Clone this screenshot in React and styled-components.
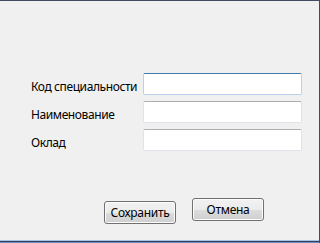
import React from "react";
import styled, { createGlobalStyle } from "styled-components";

const GlobalStyle = createGlobalStyle`
  html, body {
    margin: 0;
    padding: 0;
    background: #f0f0f0;
  }
  body {
    font-family: "Noto Sans", "Open Sans", sans-serif;
  }
`;

const fields = [
  { label: "Код специальности", focused: true },
  { label: "Наименование" },
  { label: "Оклад" },
];

const App = () => {
  return (
    <>
      <GlobalStyle />
      <Window>
        <Form>
          {fields.map((f) => (
            <Row key={f.label}>
              <Label>{f.label}</Label>
              <Input $focused={f.focused} />
            </Row>
          ))}
        </Form>
        <Buttons>
          <Button $top={3}>Сохранить</Button>
          <Button $top={0}>Отмена</Button>
        </Buttons>
        <BottomEdge />
      </Window>
    </>
  );
};

export default App;

const Window = styled.div`
  width: 319px;
  height: 242px;
  border-top: 1px solid #444b63;
  border-right: 1px solid #444b63;
  background: #f0f0f0;
  display: flex;
  flex-direction: column;
`;

const Form = styled.div`
  display: flex;
  flex-direction: column;
  gap: 6px;
  padding: 72px 0 0 31px;
`;

const Row = styled.div`
  display: flex;
  align-items: center;
  height: 22px;
`;

const Label = styled.div`
  width: 112px;
  font-size: 12px;
  letter-spacing: -0.4px;
  color: #000;
  padding-top: 5px;
  white-space: nowrap;
`;

const Input = styled.div`
  width: 157px;
  height: 20px;
  background: #fff;
  border: 1px solid ${(p) => (p.$focused ? "#b7d2ea" : "#e2e3ea")};
  border-top-color: ${(p) => (p.$focused ? "#3d7bad" : "#abadb3")};
  border-radius: 2px;
`;

const Buttons = styled.div`
  display: flex;
  align-items: flex-start;
  gap: 16px;
  padding: 47px 0 0 104px;
  flex: 1;
`;

const Button = styled.button`
  margin-top: ${(p) => p.$top}px;
  width: 72px;
  height: 23px;
  padding: 0 0 1px;
  font-family: "Noto Sans", "Open Sans", sans-serif;
  font-size: 12px;
  letter-spacing: -0.3px;
  color: #000;
  border: 1px solid #707070;
  border-radius: 3px;
  background: linear-gradient(#f2f2f2 0%, #ebebeb 50%, #dddddd 51%, #cfcfcf 100%);
  box-shadow: inset 0 0 0 1px #fcfcfc;
`;

const BottomEdge = styled.div`
  height: 3px;
  border-top: 1px solid #a9c1e2;
  border-bottom: 1px solid #6e8ec0;
  background: #2f3f5f;
  box-sizing: border-box;
`;
